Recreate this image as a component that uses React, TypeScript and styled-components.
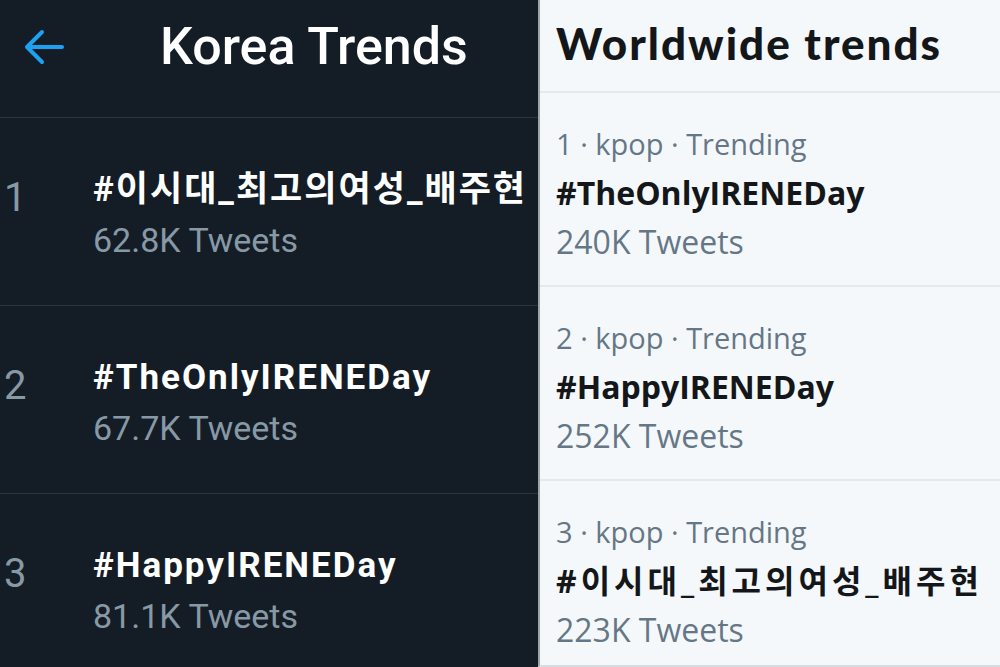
import React from "react";
import styled, { createGlobalStyle } from "styled-components";

const GlobalStyle = createGlobalStyle`
  html, body {
    margin: 0;
    padding: 0;
    width: 1000px;
    height: 667px;
    overflow: hidden;
    background: #f5f8fa;
  }
`;

const localTrends = [
  { rank: 1, tag: "#이시대_최고의여성_배주현", count: "62.8K Tweets" },
  { rank: 2, tag: "#TheOnlyIRENEDay", count: "67.7K Tweets" },
  { rank: 3, tag: "#HappyIRENEDay", count: "81.1K Tweets" },
];

const worldTrends = [
  { rank: 1, tag: "#TheOnlyIRENEDay", count: "240K Tweets", korean: false },
  { rank: 2, tag: "#HappyIRENEDay", count: "252K Tweets", korean: false },
  { rank: 3, tag: "#이시대_최고의여성_배주현", count: "223K Tweets", korean: true },
];

const App: React.FC = () => {
  return (
    <>
      <GlobalStyle />
      <Page>
        <DarkPanel>
          <DarkHeader>
            <BackButton>
              <svg width="44" height="44" viewBox="0 0 44 44" fill="none">
                <path
                  d="M40 22H6M20 7L5 22l15 15"
                  stroke="#1da1f2"
                  strokeWidth="4"
                  strokeLinecap="round"
                  strokeLinejoin="round"
                />
              </svg>
            </BackButton>
            <DarkTitle>Korea Trends</DarkTitle>
          </DarkHeader>
          {localTrends.map((t) => (
            <DarkRow key={t.rank}>
              <Rank>{t.rank}</Rank>
              <div>
                <DarkTag>{t.tag}</DarkTag>
                <DarkCount>{t.count}</DarkCount>
              </div>
            </DarkRow>
          ))}
        </DarkPanel>
        <LightPanel>
          <LightHeader>Worldwide trends</LightHeader>
          {worldTrends.map((t) => (
            <LightRow key={t.rank}>
              <Meta>{t.rank} · kpop · Trending</Meta>
              <LightTag $korean={t.korean}>{t.tag}</LightTag>
              <LightCount>{t.count}</LightCount>
            </LightRow>
          ))}
        </LightPanel>
      </Page>
    </>
  );
};

export default App;

const Page = styled.div`
  display: grid;
  grid-template-columns: 538px 1fr;
  width: 1000px;
  height: 667px;
  overflow: hidden;
`;

const DarkPanel = styled.div`
  background: #141d26;
  font-family: Roboto, "Noto Sans CJK KR", sans-serif;
  overflow: hidden;
`;

const DarkHeader = styled.div`
  height: 118px;
  border-bottom: 1px solid #2c3640;
  display: flex;
  align-items: center;
  padding-bottom: 24px;
  box-sizing: border-box;
`;

const BackButton = styled.div`
  width: 44px;
  height: 44px;
  margin-left: 22px;
  display: flex;
`;

const DarkTitle = styled.h1`
  margin: 0 0 0 94px;
  color: #ffffff;
  font-size: 52px;
  font-weight: 500;
  line-height: 60px;
`;

const DarkRow = styled.div`
  height: 188px;
  box-sizing: border-box;
  border-bottom: 1px solid #2c3640;
  display: flex;
  padding-top: 48px;
`;

const Rank = styled.div`
  width: 93px;
  padding-left: 4px;
  box-sizing: border-box;
  padding-top: 8px;
  color: #8899a6;
  font-size: 40px;
  line-height: 48px;
`;

const DarkTag = styled.div`
  color: #ffffff;
  font-size: 35px;
  font-weight: 700;
  letter-spacing: 2px;
  line-height: 48px;
  white-space: nowrap;
`;

const DarkCount = styled.div`
  color: #8899a6;
  font-size: 34px;
  line-height: 52px;
`;

const LightPanel = styled.div`
  background: #f5f8fa;
  border-left: 2px solid #9ea5ab;
  border-bottom: 2px solid #d8dde1;
  font-family: "Open Sans", "Noto Sans CJK KR", sans-serif;
  overflow: hidden;
`;

const LightHeader = styled.h2`
  margin: 0;
  height: 93px;
  box-sizing: border-box;
  border-bottom: 2px solid #e3e9ed;
  padding: 13px 0 0 16px;
  color: #14171a;
  font-family: Lato, "Noto Sans", sans-serif;
  font-weight: 900;
  font-size: 44px;
  letter-spacing: 2px;
  line-height: 60px;
`;

const LightRow = styled.div`
  height: 194px;
  box-sizing: border-box;
  border-bottom: 2px solid #e3e9ed;
  padding: 26px 0 0 16px;
`;

const Meta = styled.div`
  color: #657786;
  font-size: 29px;
  line-height: 49px;
`;

const LightTag = styled.div<{ $korean?: boolean }>`
  color: #14171a;
  font-size: 32px;
  font-weight: 700;
  letter-spacing: ${(p) => (p.$korean ? "4px" : "0")};
  line-height: 49px;
  white-space: nowrap;
`;

const LightCount = styled.div`
  color: #657786;
  font-size: 32px;
  line-height: 49px;
`;
